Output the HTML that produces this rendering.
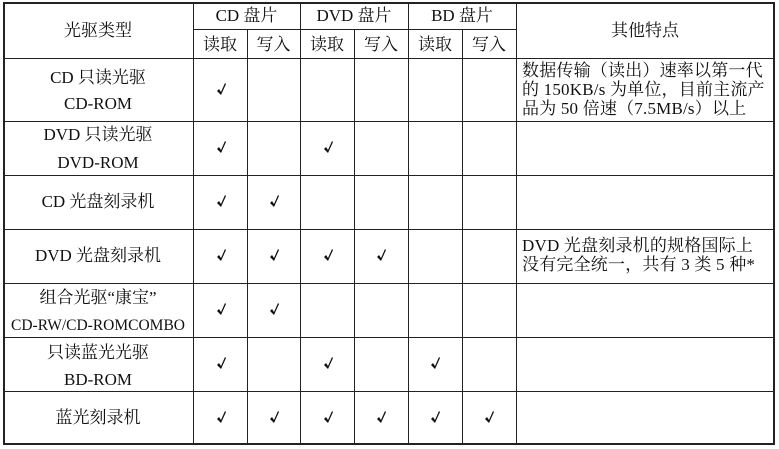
<!DOCTYPE html><html><head><meta charset="utf-8"><style>
body{margin:0;width:779px;height:449px;background:#fff;position:relative;overflow:hidden;font-family:"Liberation Serif","Noto Serif CJK SC",serif;font-size:17px;color:#111}
.h,.v{position:absolute;background:#222}
.h{height:1px}.v{width:1px}
.t{position:absolute;white-space:nowrap;text-align:center;line-height:20px}
.l{font-size:16px}
</style></head><body>
<div class="h" style="left:3px;top:2px;width:772px;height:2px"></div>
<div class="h" style="left:193px;top:29px;width:323px"></div>
<div class="h" style="left:3px;top:58px;width:772px"></div>
<div class="h" style="left:3px;top:121px;width:772px"></div>
<div class="h" style="left:3px;top:175px;width:772px"></div>
<div class="h" style="left:3px;top:229px;width:772px"></div>
<div class="h" style="left:3px;top:283px;width:772px"></div>
<div class="h" style="left:3px;top:337px;width:772px"></div>
<div class="h" style="left:3px;top:391px;width:772px"></div>
<div class="h" style="left:3px;top:443px;width:772px;height:2px"></div>
<div class="v" style="left:3px;top:2px;height:443px;width:2px"></div>
<div class="v" style="left:193px;top:2px;height:443px"></div>
<div class="v" style="left:247px;top:29px;height:416px"></div>
<div class="v" style="left:300px;top:2px;height:443px"></div>
<div class="v" style="left:354px;top:29px;height:416px"></div>
<div class="v" style="left:408px;top:2px;height:443px"></div>
<div class="v" style="left:462px;top:29px;height:416px"></div>
<div class="v" style="left:516px;top:2px;height:443px"></div>
<div class="v" style="left:773px;top:2px;height:443px;width:2px"></div>
<div class="t" style="left:3px;width:190px;top:21px">光驱类型</div>
<div class="t" style="left:193px;width:107px;top:6px">CD 盘片</div>
<div class="t" style="left:300px;width:108px;top:6px">DVD 盘片</div>
<div class="t" style="left:408px;width:108px;top:6px">BD 盘片</div>
<div class="t" style="left:516px;width:258px;top:21px">其他特点</div>
<div class="t" style="left:193px;width:54px;top:35px">读取</div>
<div class="t" style="left:247px;width:53px;top:35px">写入</div>
<div class="t" style="left:300px;width:54px;top:35px">读取</div>
<div class="t" style="left:354px;width:54px;top:35px">写入</div>
<div class="t" style="left:408px;width:54px;top:35px">读取</div>
<div class="t" style="left:462px;width:54px;top:35px">写入</div>
<div class="t" style="left:3px;width:190px;top:65px;line-height:26px">CD 只读光驱<br>CD-ROM</div>
<div class="t" style="left:3px;width:190px;top:121px;line-height:28px">DVD 只读光驱<br>DVD-ROM</div>
<div class="t" style="left:3px;width:190px;top:192px">CD 光盘刻录机</div>
<div class="t" style="left:3px;width:190px;top:246px">DVD 光盘刻录机</div>
<div class="t" style="left:3px;width:190px;top:284px;line-height:27px">组合光驱“康宝”<br><span style="font-size:15.5px">CD-RW/CD-ROMCOMBO</span></div>
<div class="t" style="left:3px;width:190px;top:339px;line-height:27px">只读蓝光光驱<br>BD-ROM</div>
<div class="t" style="left:3px;width:190px;top:408px">蓝光刻录机</div>
<div class="t" style="left:522px;top:61px;text-align:left;line-height:19px;letter-spacing:0.2px">数据传输（读出）速率以第一代<br>的 150KB/s 为单位，目前主流产<br>品为 50 倍速（7.5MB/s）以上</div>
<div class="t" style="left:522px;top:236px;text-align:left;line-height:19px;letter-spacing:0.2px">DVD 光盘刻录机的规格国际上<br>没有完全统一，共有 3 类 5 种*</div>
<svg width="779" height="449" style="position:absolute;left:0;top:0">
<defs><path id="k" d="M-4 1 L-2 -1 L0 2 L4 -7 L5 -6 L0 5 Z" fill="#111"/></defs>
<g>
<use href="#k" x="221" y="90"/>
<use href="#k" x="221" y="148"/><use href="#k" x="328" y="148"/>
<use href="#k" x="221" y="202"/><use href="#k" x="274" y="202"/>
<use href="#k" x="221" y="256"/><use href="#k" x="274" y="256"/><use href="#k" x="328" y="256"/><use href="#k" x="381" y="256"/>
<use href="#k" x="221" y="310"/><use href="#k" x="274" y="310"/>
<use href="#k" x="221" y="364"/><use href="#k" x="328" y="364"/><use href="#k" x="435" y="364"/>
<use href="#k" x="221" y="418"/><use href="#k" x="274" y="418"/><use href="#k" x="328" y="418"/><use href="#k" x="381" y="418"/><use href="#k" x="435" y="418"/><use href="#k" x="489" y="418"/>
</g></svg>
</body></html>
